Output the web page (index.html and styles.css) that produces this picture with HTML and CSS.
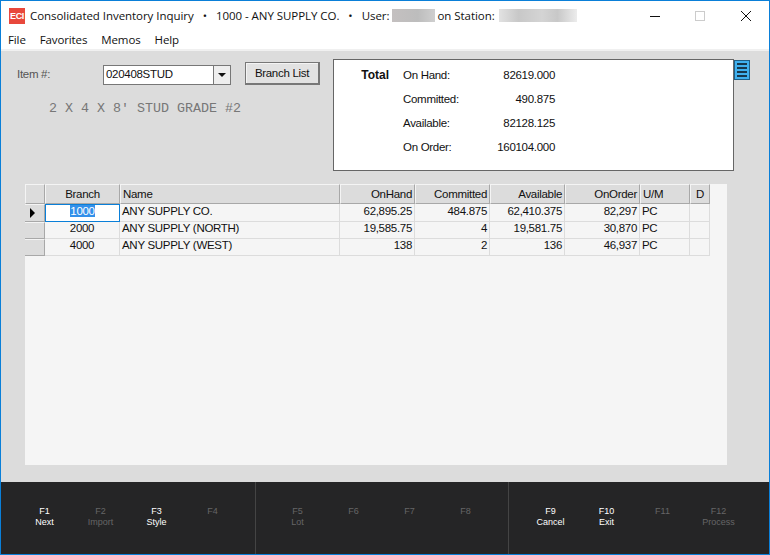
FILE: index.html
```html
<!DOCTYPE html>
<html lang="en">
<head>
    <meta charset="UTF-8">
    <meta name="viewport" content="width=device-width, initial-scale=1.0">
    <title>Consolidated Inventory Inquiry</title>
    <link rel="stylesheet" href="styles.css">
</head>
<body>
<div class="window">

    <div class="titlebar">
        <span class="app-icon">ECI</span>
        <span class="title-text">Consolidated Inventory Inquiry</span>
        <span class="title-dot">&bull;</span>
        <span class="title-text">1000 - ANY SUPPLY CO.</span>
        <span class="title-dot">&bull;</span>
        <span class="title-text">User:</span>
        <span class="blur blur-user"></span>
        <span class="title-text">on Station:</span>
        <span class="blur blur-station"></span>
        <div class="win-controls">
            <svg class="win-btn" width="46" height="20" viewBox="0 0 46 20"><path d="M19 10.5h10" stroke="#111" fill="none"/></svg>
            <svg class="win-btn" width="46" height="20" viewBox="0 0 46 20"><rect x="18.5" y="5.5" width="9" height="9" stroke="#ccc" fill="none"/></svg>
            <svg class="win-btn" width="46" height="20" viewBox="0 0 46 20"><path d="M18 5l10 10M28 5L18 15" stroke="#111" fill="none"/></svg>
        </div>
    </div>

    <div class="menubar">
        <span>File</span>
        <span>Favorites</span>
        <span>Memos</span>
        <span>Help</span>
    </div>

    <div class="content">
        <div class="top-area">
            <div class="item-panel">
                <div class="item-row">
                    <label class="item-label">Item #:</label>
                    <div class="combo">
                        <span class="combo-value">020408STUD</span>
                        <span class="combo-arrow"></span>
                    </div>
                    <button class="branch-btn">Branch List</button>
                </div>
                <div class="item-desc">2 X 4 X 8' STUD GRADE #2</div>
            </div>

            <div class="totals">
                <div class="totals-head">Total</div>
                <div class="totals-rows">
                    <div class="totals-row"><span>On Hand:</span><span>82619.000</span></div>
                    <div class="totals-row"><span>Committed:</span><span>490.875</span></div>
                    <div class="totals-row"><span>Available:</span><span>82128.125</span></div>
                    <div class="totals-row"><span>On Order:</span><span>160104.000</span></div>
                </div>
            </div>

            <div class="list-icon">
                <i></i><i></i><i></i><i></i>
            </div>
        </div>

        <div class="grid-wrap">
            <table class="grid">
                <colgroup>
                    <col class="c-mark"><col class="c-branch"><col class="c-name">
                    <col class="c-num"><col class="c-num"><col class="c-num"><col class="c-num">
                    <col class="c-um"><col class="c-d">
                </colgroup>
                <thead>
                    <tr>
                        <th></th>
                        <th class="center">Branch</th>
                        <th>Name</th>
                        <th class="right">OnHand</th>
                        <th class="right">Committed</th>
                        <th class="right">Available</th>
                        <th class="right">OnOrder</th>
                        <th>U/M</th>
                        <th class="center">D</th>
                    </tr>
                </thead>
                <tbody>
                    <tr>
                        <th class="mark"><span class="arrow"></span></th>
                        <td class="center current"><span class="selected">1000</span></td>
                        <td>ANY SUPPLY CO.</td>
                        <td class="right">62,895.25</td>
                        <td class="right">484.875</td>
                        <td class="right">62,410.375</td>
                        <td class="right">82,297</td>
                        <td>PC</td>
                        <td></td>
                    </tr>
                    <tr>
                        <th class="mark"></th>
                        <td class="center">2000</td>
                        <td>ANY SUPPLY (NORTH)</td>
                        <td class="right">19,585.75</td>
                        <td class="right">4</td>
                        <td class="right">19,581.75</td>
                        <td class="right">30,870</td>
                        <td>PC</td>
                        <td></td>
                    </tr>
                    <tr>
                        <th class="mark"></th>
                        <td class="center">4000</td>
                        <td>ANY SUPPLY (WEST)</td>
                        <td class="right">138</td>
                        <td class="right">2</td>
                        <td class="right">136</td>
                        <td class="right">46,937</td>
                        <td>PC</td>
                        <td></td>
                    </tr>
                </tbody>
            </table>
        </div>
    </div>

    <div class="fkeys">
        <div class="fgroup">
            <div class="fkey on">F1<br>Next</div>
            <div class="fkey">F2<br>Import</div>
            <div class="fkey on">F3<br>Style</div>
            <div class="fkey">F4</div>
        </div>
        <div class="fgroup">
            <div class="fkey">F5<br>Lot</div>
            <div class="fkey">F6</div>
            <div class="fkey">F7</div>
            <div class="fkey">F8</div>
        </div>
        <div class="fgroup">
            <div class="fkey on">F9<br>Cancel</div>
            <div class="fkey on">F10<br>Exit</div>
            <div class="fkey">F11</div>
            <div class="fkey">F12<br>Process</div>
        </div>
    </div>

</div>
</body>
</html>
```

FILE: styles.css
```css
* {
    box-sizing: border-box;
}
body {
    margin: 0;
    font-family: "Liberation Sans", Arial, sans-serif;
    font-size: 11.5px;
    letter-spacing: -0.3px;
    color: #111;
}
.window {
    width: 770px;
    height: 555px;
    border: 1px solid #0a7fd8;
    display: flex;
    flex-direction: column;
    background-color: #dcdcdc;
    overflow: hidden;
}

/* title bar */
.titlebar {
    height: 29px;
    background-color: #fff;
    display: flex;
    align-items: center;
    padding-left: 8px;
    font-family: "Open Sans", sans-serif;
    font-size: 11.5px;
    letter-spacing: -0.05px;
    flex: none;
}
.app-icon {
    width: 16px;
    height: 16px;
    background-color: #e8483c;
    color: #fff;
    font-family: "Liberation Sans", sans-serif;
    font-size: 9px;
    font-weight: bold;
    line-height: 16px;
    text-align: center;
    margin-right: 5px;
    letter-spacing: -0.3px;
}
.title-dot {
    margin: 0 9px;
}
.blur {
    height: 13px;
    margin: 0 2px;
}
.blur-user {
    width: 43px;
    margin-left: 3px;
    background: linear-gradient(90deg, #c4c0c0, #bdbdbd 60%, #cfcfcf);
}
.blur-station {
    width: 78px;
    margin-left: 4px;
    background: linear-gradient(90deg, #e2e2e2, #c8c8c8 25%, #d4d4d4 55%, #c8c8c8 75%, #ececec);
}
.win-controls {
    margin-left: auto;
    display: flex;
}
.win-btn {
    display: block;
}

/* menu */
.menubar {
    height: 21px;
    background-color: #fff;
    display: flex;
    gap: 14px;
    padding-left: 7px;
    align-items: center;
    font-family: "Open Sans", sans-serif;
    font-size: 11.5px;
    letter-spacing: -0.12px;
    border-bottom: 2px solid #f0f0f0;
    flex: none;
}

/* form area */
.content {
    flex: 1;
    min-height: 0;
    padding: 8px 0 0 16px;
}
.top-area {
    display: flex;
    align-items: flex-start;
    height: 125px;
}
.item-panel {
    width: 316px;
}
.item-row {
    display: flex;
    align-items: flex-start;
    padding-top: 3px;
}
.item-label {
    width: 86px;
    color: #555;
    padding-top: 6px;
}
.combo {
    width: 128px;
    height: 20px;
    border: 1px solid #777;
    background-color: #fff;
    display: flex;
    margin-top: 3px;
}
.combo-value {
    flex: 1;
    padding-left: 2px;
    line-height: 17px;
}
.combo-arrow {
    width: 17px;
    background-color: #eee;
    border-left: 1px solid #777;
    position: relative;
}
.combo-arrow::after {
    content: "";
    position: absolute;
    left: 4px;
    top: 7px;
    border-left: 4px solid transparent;
    border-right: 4px solid transparent;
    border-top: 4px solid #111;
}
.branch-btn {
    width: 75px;
    height: 23px;
    margin-left: 14px;
    padding: 0 0 1px;
    border: 1px solid #777;
    border-right-width: 2px;
    border-bottom-width: 2px;
    background-color: #e2e2e2;
    font-family: inherit;
    font-size: 11.5px;
    letter-spacing: -0.3px;
    color: #111;
    box-shadow: inset 1px 1px 0 #f4f4f4;
}
.item-desc {
    font-family: "Liberation Mono", monospace;
    font-size: 13.33px;
    letter-spacing: 0;
    color: #777;
    margin: 16px 0 0 32px;
}

.totals {
    width: 401px;
    height: 112px;
    border: 1px solid #666;
    background-color: #fff;
    display: flex;
    padding-top: 8px;
}
.totals-head {
    width: 69px;
    font-size: 12px;
    letter-spacing: 0;
    font-weight: bold;
    text-align: right;
    line-height: 14px;
    padding-right: 14px;
}
.totals-rows {
    width: 152px;
}
.totals-row {
    display: flex;
    justify-content: space-between;
    height: 24px;
    line-height: 14px;
}
.list-icon {
    width: 16px;
    height: 20px;
    margin-top: 1px;
    background-color: #3fb0ee;
    border: 1px solid #1f5f86;
    display: flex;
    flex-direction: column;
    justify-content: space-evenly;
    padding: 0 2px;
}
.list-icon i {
    height: 2px;
    background-color: #17384d;
}

/* data grid */
.grid-wrap {
    width: 702px;
    height: 281px;
    margin-left: 8px;
    background-color: #f5f5f5;
}
.grid {
    border-collapse: separate;
    border-spacing: 0;
    table-layout: fixed;
    width: 685px;
}
.c-mark { width: 20px; }
.c-branch { width: 75px; }
.c-name { width: 220px; }
.c-num { width: 75px; }
.c-um { width: 50px; }
.c-d { width: 20px; }
.grid th, .grid td {
    padding: 0 2px;
    font-weight: normal;
    text-align: left;
    white-space: nowrap;
    overflow: hidden;
}
.grid thead th {
    height: 20px;
    background-color: #dcdcdc;
    border-top: 1px solid #f4f4f4;
    border-left: 1px solid #f4f4f4;
    border-right: 1px solid #a8a8a8;
    border-bottom: 1px solid #a8a8a8;
}
.grid td {
    height: 17px;
    padding-bottom: 4px;
    background-color: #f5f5f5;
    border-right: 1px solid #dcdcdc;
    border-bottom: 1px solid #dcdcdc;
    line-height: 12px;
}
.grid .mark {
    height: 17px;
    padding: 0;
    background-color: #dcdcdc;
    border-top: 1px solid #f4f4f4;
    border-right: 1px solid #a8a8a8;
    border-bottom: 1px solid #a8a8a8;
    vertical-align: middle;
}
.grid .right {
    text-align: right;
}
.grid .center {
    text-align: center;
}
.grid .current {
    background-color: #fff;
    border: 1px solid #0a7fd8;
}
.selected {
    background-color: #3390ea;
    color: #fff;
}
.arrow {
    display: block;
    margin-left: 5px;
    width: 0;
    border-top: 5px solid transparent;
    border-bottom: 5px solid transparent;
    border-left: 5px solid #000;
}

/* function keys */
.fkeys {
    height: 72px;
    flex: none;
    background-color: #252526;
    display: flex;
    font-size: 9px;
    letter-spacing: 0;
}
.fgroup {
    display: flex;
    padding: 24px 0 0 13.5px;
    width: 253px;
    border-left: 1px solid #444;
}
.fgroup:first-child {
    width: 254px;
    padding-left: 15.5px;
    border-left: none;
}
.fkey {
    width: 56px;
    text-align: center;
    line-height: 10.5px;
    color: #666;
}
.fkey.on {
    color: #fff;
}
```
